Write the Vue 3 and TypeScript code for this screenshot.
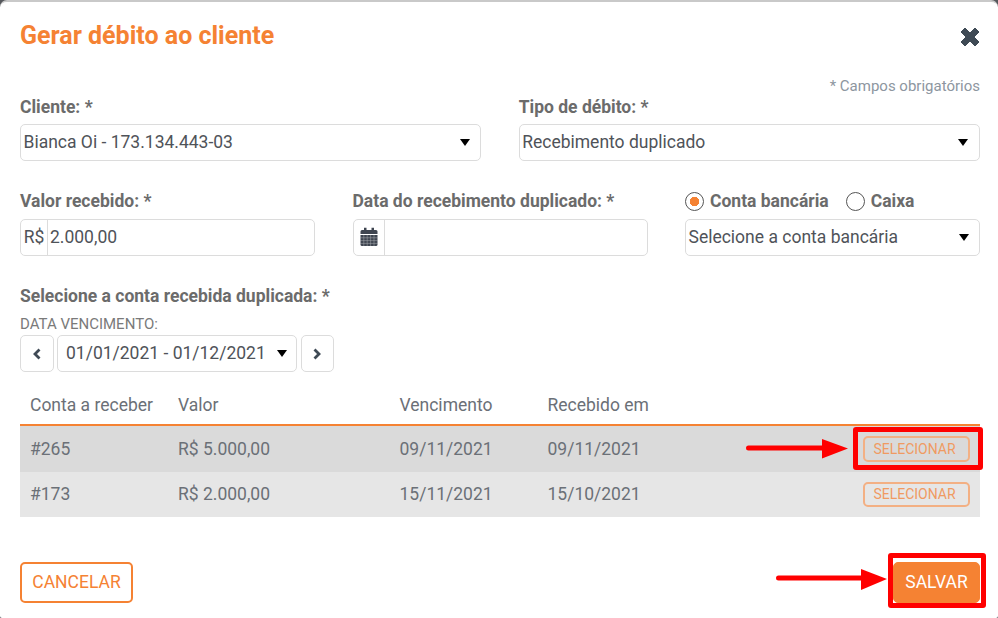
<script setup lang="ts">
interface Row { id: string; valor: string; venc: string; rec: string }
const rows: Row[] = [
  { id: '#265', valor: 'R$ 5.000,00', venc: '09/11/2021', rec: '09/11/2021' },
  { id: '#173', valor: 'R$ 2.000,00', venc: '15/11/2021', rec: '15/10/2021' },
]
</script>

<template>
  <div class="page">
    <div class="modal">
      <header class="head">
        <h1 class="title">Gerar débito ao cliente</h1>
        <svg class="close" viewBox="0 0 20 20" width="20" height="20" aria-label="Fechar">
          <path d="M1 5 5 1l5 5 5-5 4 4-5 5 5 5-4 4-5-5-5 5-4-4 5-5z" fill="#3f4a55" stroke="#3f4a55" stroke-width="1" stroke-linejoin="round" />
        </svg>
      </header>
      <p class="required">* Campos obrigatórios</p>

      <div class="grid two">
        <div class="field">
          <label class="lbl">Cliente: *</label>
          <div class="control select"><span>Bianca Oi - 173.134.443-03</span><i class="caret"></i></div>
        </div>
        <div class="field">
          <label class="lbl">Tipo de débito: *</label>
          <div class="control select"><span>Recebimento duplicado</span><i class="caret"></i></div>
        </div>
      </div>

      <div class="grid three">
        <div class="field">
          <label class="lbl">Valor recebido: *</label>
          <div class="control group">
            <span class="addon money">R$</span>
            <span class="val">2.000,00</span>
          </div>
        </div>
        <div class="field">
          <label class="lbl">Data do recebimento duplicado: *</label>
          <div class="control group">
            <span class="addon cal">
              <svg viewBox="0 0 18 20" width="18" height="20">
                <path d="M.5 4.500A1.500 1.500 0 0 1 2 3h2V.8h2.500V3h5V.8H14V3h2a1.500 1.500 0 0 1 1.500 1.500V7H.5z" fill="#3f4550" />
                <path d="M.5 8h17v9.500A1.500 1.500 0 0 1 16 19H2a1.500 1.500 0 0 1-1.500-1.500z" fill="#3f4550" />
                <path d="M3.800 8v11M7.200 8v11M10.600 8v11M14 8v11M.5 10.800h17M.5 13.600h17M.5 16.400h17" stroke="#fff" stroke-width=".5" opacity=".55" />
              </svg>
            </span>
          </div>
        </div>
        <div class="field">
          <div class="radios">
            <span class="radio on"></span><span class="radio-text">Conta bancária</span>
            <span class="radio off"></span><span class="radio-text">Caixa</span>
          </div>
          <div class="control select"><span>Selecione a conta bancária</span><i class="caret"></i></div>
        </div>
      </div>

      <section class="pick">
        <label class="lbl">Selecione a conta recebida duplicada: *</label>
        <div class="small">DATA VENCIMENTO:</div>
        <div class="pager">
          <button class="nav" type="button" aria-label="Anterior">
            <svg viewBox="0 0 12 14" width="12" height="14"><path d="M8.500 2.500 4 7l4.500 4.500" fill="none" stroke="#3f4a55" stroke-width="2.800" /></svg>
          </button>
          <div class="control range"><span>01/01/2021 - 01/12/2021</span><i class="caret"></i></div>
          <button class="nav" type="button" aria-label="Próximo">
            <svg viewBox="0 0 12 14" width="12" height="14"><path d="M3.500 2.500 8 7l-4.500 4.500" fill="none" stroke="#3f4a55" stroke-width="2.800" /></svg>
          </button>
        </div>
      </section>

      <div class="table">
        <div class="tr th">
          <span>Conta a receber</span><span>Valor</span><span>Vencimento</span><span>Recebido em</span><span></span>
        </div>
        <div v-for="r in rows" :key="r.id" class="tr td">
          <span>{{ r.id }}</span><span>{{ r.valor }}</span><span>{{ r.venc }}</span><span>{{ r.rec }}</span>
          <span class="act"><button class="sel" type="button">SELECIONAR</button></span>
        </div>
      </div>

      <footer class="foot">
        <button class="btn ghost" type="button">CANCELAR</button>
        <button class="btn solid" type="button">SALVAR</button>
      </footer>

      <div class="mark box1"></div>
      <div class="mark box2"></div>
      <svg class="arrows" viewBox="0 0 998 618" width="998" height="618">
        <path d="M748.500 448H824" stroke="#f00" stroke-width="5" stroke-linecap="round" />
        <path d="M822 439 848 448.500 822 458.500z" fill="#f00" />
        <path d="M778.500 578H864" stroke="#f00" stroke-width="5" stroke-linecap="round" />
        <path d="M861 569 887 579 861 590z" fill="#f00" />
      </svg>
    </div>
  </div>
</template>

<style>
html, body { margin: 0; background: #fff; }
</style>

<style scoped>
.page {
  width: 998px;
  height: 618px;
  background: #55585c;
  overflow: hidden;
  font-family: Roboto, "Liberation Sans", sans-serif;
}
.modal {
  position: relative;
  box-sizing: border-box;
  width: 998px;
  height: 618px;
  padding: 0 18px 0 20px;
  background: #fff;
  border-top: 2px solid #c9c9c9;
  border-radius: 7px 7px 2px 2px;
  color: #5f6368;
}
.head {
  display: flex;
  justify-content: space-between;
  align-items: flex-start;
  height: 66px;
}
.title {
  margin: 18px 0 0;
  font-size: 25px;
  line-height: 32px;
  font-weight: 700;
  color: #f58233;
}
.close { margin: 25px 0 0 0; }
.required {
  margin: 9px 0 0;
  height: 18px;
  text-align: right;
  font-size: 15px;
  line-height: 18px;
  color: #8d96a0;
}
.grid { display: grid; }
.two { grid-template-columns: 461.300px 461.300px; column-gap: 37.400px; margin-top: 2.500px; }
.two .control { padding-bottom: 1px; }
.three { grid-template-columns: 295px 295px 295px; column-gap: 37.500px; margin-top: 31px; }
.field { display: flex; flex-direction: column; }
.lbl {
  display: block;
  height: 18px;
  font-size: 17.500px;
  line-height: 18px;
  font-weight: 700;
  color: #6b6b6b;
}
.control {
  box-sizing: border-box;
  height: 37px;
  margin-top: 8.500px;
  display: flex;
  align-items: center;
  border: 1px solid #dcdcdc;
  border-radius: 5px;
  background: #fff;
  font-size: 17.500px;
  color: #4f5359;
}
.select {
  justify-content: space-between;
  padding: 0 10.500px 0 2.500px;
}
.caret {
  width: 0;
  height: 0;
  border-left: 5px solid transparent;
  border-right: 5px solid transparent;
  border-top: 7px solid #000;
}
.group { overflow: hidden; }
.addon {
  box-sizing: border-box;
  height: 100%;
  display: flex;
  align-items: center;
  justify-content: center;
  border-right: 1px solid #dcdcdc;
}
.money { width: 27px; }
.cal { width: 31.500px; }
.val { padding-left: 2px; }
.radios {
  display: flex;
  align-items: center;
  height: 18px;
  font-size: 17.500px;
  font-weight: 700;
  color: #6b6b6b;
}
.radio {
  box-sizing: border-box;
  width: 19px;
  height: 19px;
  border-radius: 50%;
  border: 1.500px solid #555;
  background: #fff;
  margin-right: 6px;
  flex: none;
}
.radio.on { background: radial-gradient(circle, #f58233 0 4.500px, #fff 5px); }
.radio.off { margin-left: 17.500px; margin-right: 5.500px; }
.pick { margin-top: 31.500px; }
.small {
  margin-top: 11.500px;
  height: 15px;
  font-size: 15px;
  line-height: 15px;
  color: #7a7a7a;
}
.pager {
  display: flex;
  gap: 3.500px;
  margin-top: 3.500px;
}
.nav {
  box-sizing: border-box;
  width: 33.500px;
  height: 37px;
  padding: 0;
  display: flex;
  align-items: center;
  justify-content: center;
  border: 1px solid #dcdcdc;
  border-radius: 5px;
  background: #fff;
}
.range {
  width: 240px;
  margin-top: 0;
  justify-content: space-between;
  padding: 0 9px 1px 8px;
}
.table { margin-top: 13px; }
.tr {
  display: grid;
  grid-template-columns: 148px 221.500px 148px 1fr 150px;
  align-items: center;
  padding-left: 10px;
  font-size: 17.500px;
  color: #6b7077;
}
.th { height: 39px; border-bottom: 2px solid #f58233; }
.td { height: 45.500px; }
.td:nth-child(2) { background: #dadada; }
.td:nth-child(3) { background: #e6e6e6; }
.act { display: flex; justify-content: flex-end; padding-right: 10px; }
.sel {
  box-sizing: border-box;
  width: 107px;
  height: 25.500px;
  padding: 0 4px 0 0;
  border: 2px solid #f3b084;
  border-radius: 5px;
  background: transparent;
  color: #f09a62;
  font: 400 14px Roboto, "Liberation Sans", sans-serif;
}
.foot {
  display: flex;
  justify-content: space-between;
  margin-top: 44.500px;
}
.btn {
  box-sizing: border-box;
  height: 41px;
  padding: 0;
  border-radius: 5px;
  font: 400 17.500px Roboto, "Liberation Sans", sans-serif;
}
.ghost { width: 113px; border: 2px solid #f58233; background: #fff; color: #f58233; }
.solid { width: 87px; border: 1px solid #f58233; background: #f58233; color: #fff; }
.mark {
  position: absolute;
  box-sizing: border-box;
  border: 5px solid #f00;
  border-radius: 3px;
  pointer-events: none;
}
.box1 { left: 853px; top: 425px; width: 129.500px; height: 42.500px; }
.box2 { left: 887.500px; top: 551px; width: 98px; height: 55px; }
.arrows { position: absolute; left: 0; top: -2px; pointer-events: none; }
</style>
